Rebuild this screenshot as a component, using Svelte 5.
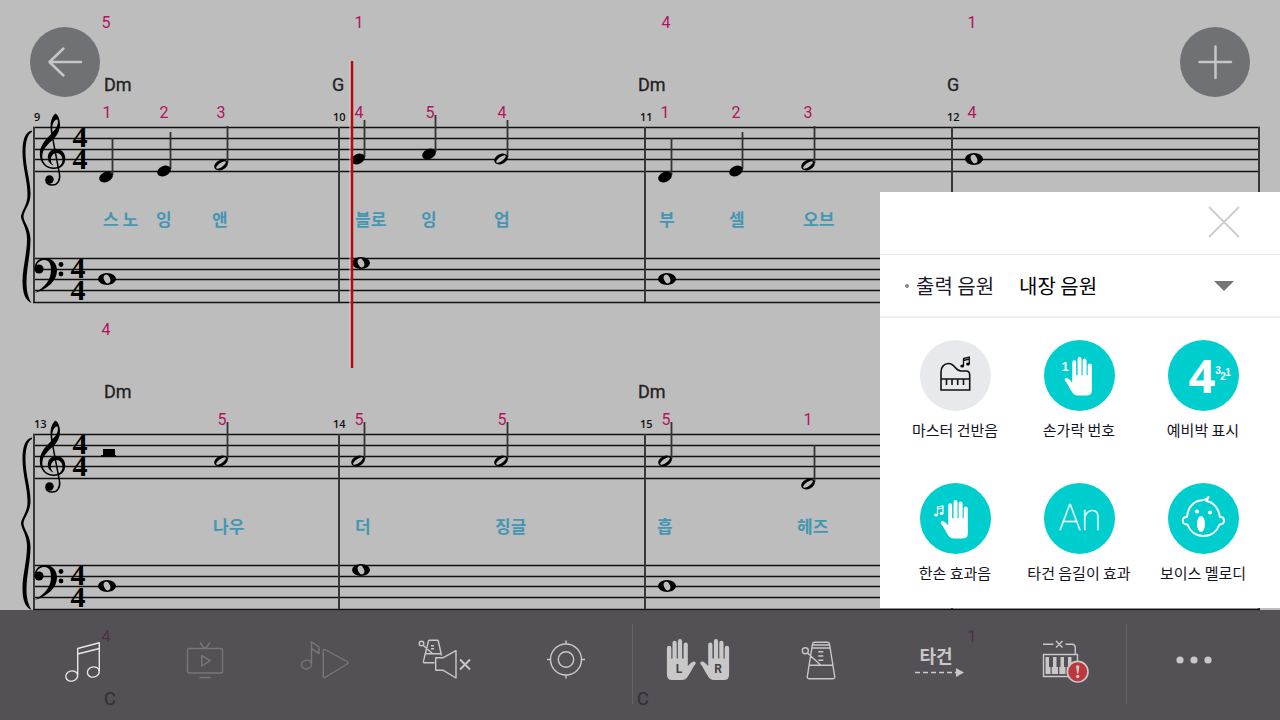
<script lang="ts">
  type Head = 'quarter' | 'half' | 'whole'

  interface Note {
    x: number
    y: number
    head: Head
  }

  interface Mark {
    x: number
    text: string
  }

  interface System {
    bassFingers: Mark[]
    chords: Mark[]
    bars: Mark[]
    fingers: Mark[]
    lyrics: Mark[]
    notes: Note[]
    rest?: boolean
    cursor?: number
  }

  const staffLines = [127, 138, 149, 159, 171, 258, 269, 279, 290, 302]
  const barLines = [34, 339, 645, 952, 1259]

  const systems: System[] = [
    {
      bassFingers: [
        { x: 106, text: '5' },
        { x: 359, text: '1' },
        { x: 666, text: '4' },
        { x: 972, text: '1' }
      ],
      chords: [
        { x: 104, text: 'Dm' },
        { x: 332, text: 'G' },
        { x: 638, text: 'Dm' },
        { x: 947, text: 'G' }
      ],
      bars: [
        { x: 34, text: '9' },
        { x: 333, text: '10' },
        { x: 640, text: '11' },
        { x: 947, text: '12' }
      ],
      fingers: [
        { x: 107, text: '1' },
        { x: 164, text: '2' },
        { x: 221, text: '3' },
        { x: 359, text: '4' },
        { x: 430, text: '5' },
        { x: 502, text: '4' },
        { x: 665, text: '1' },
        { x: 736, text: '2' },
        { x: 808, text: '3' },
        { x: 972, text: '4' }
      ],
      lyrics: [
        { x: 103, text: '스 노' },
        { x: 156, text: '잉' },
        { x: 212, text: '앤' },
        { x: 355, text: '블로' },
        { x: 421, text: '잉' },
        { x: 494, text: '업' },
        { x: 659, text: '부' },
        { x: 729, text: '셀' },
        { x: 803, text: '오브' }
      ],
      notes: [
        { x: 106, y: 177, head: 'quarter' },
        { x: 164, y: 171, head: 'quarter' },
        { x: 221, y: 165, head: 'half' },
        { x: 358, y: 159, head: 'quarter' },
        { x: 429, y: 154, head: 'quarter' },
        { x: 501, y: 159, head: 'half' },
        { x: 665, y: 177, head: 'quarter' },
        { x: 736, y: 171, head: 'quarter' },
        { x: 808, y: 165, head: 'half' },
        { x: 974, y: 159, head: 'whole' },
        { x: 107, y: 279, head: 'whole' },
        { x: 361, y: 263, head: 'whole' },
        { x: 667, y: 279, head: 'whole' }
      ],
      cursor: 352
    },
    {
      bassFingers: [{ x: 106, text: '4' }],
      chords: [
        { x: 104, text: 'Dm' },
        { x: 638, text: 'Dm' }
      ],
      bars: [
        { x: 34, text: '13' },
        { x: 333, text: '14' },
        { x: 640, text: '15' }
      ],
      fingers: [
        { x: 222, text: '5' },
        { x: 359, text: '5' },
        { x: 502, text: '5' },
        { x: 666, text: '5' },
        { x: 808, text: '1' }
      ],
      lyrics: [
        { x: 213, text: '나우' },
        { x: 355, text: '더' },
        { x: 495, text: '징글' },
        { x: 657, text: '흡' },
        { x: 797, text: '헤즈' }
      ],
      notes: [
        { x: 221, y: 154, head: 'half' },
        { x: 358, y: 154, head: 'half' },
        { x: 501, y: 154, head: 'half' },
        { x: 665, y: 154, head: 'half' },
        { x: 808, y: 177, head: 'half' },
        { x: 107, y: 279, head: 'whole' },
        { x: 361, y: 263, head: 'whole' },
        { x: 667, y: 279, head: 'whole' }
      ],
      rest: true
    },
    {
      bassFingers: [
        { x: 106, text: '4' },
        { x: 972, text: '1' }
      ],
      chords: [
        { x: 104, text: 'C' },
        { x: 637, text: 'C' }
      ],
      bars: [],
      fingers: [],
      lyrics: [],
      notes: []
    }
  ]

  let options = $state([
    { id: 'piano', label: '마스터 건반음', on: false },
    { id: 'fingers', label: '손가락 번호', on: true },
    { id: 'count', label: '예비박 표시', on: true },
    { id: 'onehand', label: '한손 효과음', on: true },
    { id: 'length', label: '타건 음길이 효과', on: true },
    { id: 'voice', label: '보이스 멜로디', on: true }
  ])

  let source = $state('내장 음원')
</script>

{#snippet hand()}
  <path
    d="M8.2 21V5.5a2.1 2.1 0 0 1 4.2 0V19.5h1.5V2.2a2.1 2.1 0 0 1 4.2 0V19.5h1.2V3.8a2.1 2.1 0 0 1 4.2 0V19.5h1.2V9a2.2 2.2 0 0 1 4.4 0V35.5Q29 41 24 41H14Q10.5 41 8.5 38C5 33 3.5 28.5 0.5 25Q-0.5 22 3 22.5Q6 24 8.2 27Z"
  />
{/snippet}

{#snippet optionIcon(id: string)}
  {#if id === 'piano'}
    <g fill="none" stroke="#111" stroke-width="1.6">
      <path d="M21 50V32C21 27 24 23.5 28.5 23.5C35.5 23.5 34.5 31 41 31H46Q49.7 31 49.7 35V50ZM21 39H49.7M26.5 39V45M32 39V45M37.7 39V45M43.5 39V45" />
      <path d="M43.5 26V18.5L49.3 17V24M43.5 20.5L49.3 19" stroke-width="1.3" />
    </g>
    <ellipse cx="42.2" cy="26" rx="1.9" ry="1.5" />
    <ellipse cx="48" cy="24" rx="1.9" ry="1.5" />
  {:else if id === 'fingers'}
    <g fill="#fff">
      <g transform="translate(20.5 17) scale(.94)">{@render hand()}</g>
      <text x="21" y="31" class="tiny-one">1</text>
    </g>
  {:else if id === 'count'}
    <g fill="#fff">
      <text x="34" y="53" class="big-four">4</text>
      <text x="50" y="34" class="tiny">3</text>
      <text x="55" y="40" class="tiny">2</text>
      <text x="60" y="36" class="tiny">1</text>
    </g>
  {:else if id === 'onehand'}
    <g fill="#fff">
      <g transform="translate(20.5 17) scale(.94)">{@render hand()}</g>
      <path d="M17.5 32V24L23 23V30.5M17.5 26L23 25" fill="none" stroke="#fff" stroke-width="1.2" />
      <ellipse cx="16" cy="32" rx="1.9" ry="1.5" />
      <ellipse cx="21.5" cy="30.5" rx="1.9" ry="1.5" />
    </g>
  {:else if id === 'length'}
    <text x="36" y="47" class="an">An</text>
  {:else}
    <path
      d="M32 17.5C36 17.5 38.5 16 40.5 14L38.5 18C46 19.5 51 26 52 34C57 33 58 42 51.5 41.5C49 48.500 43 53 35.500 53S22 48.500 19.500 41.500C13 42 13.500 33 19 34C19.500 26 24 19 32 17.500"
      fill="none"
      stroke="#fff"
      stroke-width="2"
      stroke-linejoin="round"
    />
    <g fill="#fff">
      <circle cx="29" cy="28.5" r="2.1" />
      <circle cx="42" cy="29.5" r="2.1" />
      <ellipse cx="33" cy="41" rx="4" ry="8" />
    </g>
  {/if}
{/snippet}

<main class="player">
  <section class="score" aria-label="악보">
    {#each systems as system}
      <svg class="system" viewBox="0 0 1280 307">
        {#each system.bassFingers as mark}
          <text x={mark.x} y="28" class="finger">{mark.text}</text>
        {/each}
        {#each system.chords as mark}
          <text x={mark.x} y="91" class="chord">{mark.text}</text>
        {/each}

        {#if system.bars.length}
          {#each staffLines as y}
            <line x1="33" x2="1260" y1={y + 0.5} y2={y + 0.5} stroke="#111" stroke-width="1.5" />
          {/each}
          {#each barLines as x}
            <line x1={x} x2={x} y1="127" y2="302" stroke="#383838" stroke-width="2" />
          {/each}

          <!-- brace -->
          <path d="M32 130.5C25 132 22.5 140 22.5 152C22.5 168 27.5 180 27.5 195C27.5 205 21 212 21 216.5C21 221 27 228 27 239C27 254 22.5 268 22.5 281C22.5 293 25 300 31.5 303C28 297 26.5 291 26.5 282C26.5 268 30.5 254 30.5 240C30.5 228 23.5 222 23.5 216.5C23.5 211 30.5 205 30.5 194C30.5 180 25.5 168 25.5 152C25.5 142 27.5 134 32 132Z" />
          <!-- treble clef -->
          <path
            fill-rule="evenodd"
            d="M55.5 113.5C51 117 49.5 124 51.2 134C45 140 39.8 146 39.8 154C39.8 163 46 169 54 169C60.5 169 65.3 165 65.3 158.5C65.3 153 61.5 149 56.5 149C51.5 149 47.8 152.5 47.8 157.5C47.8 161.5 50 164 53.5 165.5C51.5 163.5 50.5 161.5 50.8 159C51.2 156 53.5 153 56.5 153C60 153 62.5 156 62.5 160C62.5 164.5 59 167.5 54 167.5C47 167.5 42.3 163 42.3 156.5C42.3 149 48 144 53 139.5C57 135.5 60 131 60 124.5C60 119.5 58.5 115.5 55.5 113.5ZM57.5 119.5C59 124 56 129 52.6 132C51.5 127 53 119.5 57.5 119.5Z"
          />
          <path d="M51.5 132L59.5 174C60.5 181 57 185 52.5 185C48.5 185 46 183 46 180" fill="none" stroke="#000" stroke-width="1.5" />
          <circle cx="49.5" cy="179.5" r="4.2" />
          <!-- bass clef -->
          <path d="M34.5 268C35 261.5 39.5 258 45 258C52 258 57 263 57 270.5C57 281 47 289.5 34.5 293C45 287 51 280 51 270C51 263.5 49 260 44.5 260C40.5 260 37 262.5 36.5 266Z" />
          <circle cx="39" cy="269" r="4.6" />
          <circle cx="61" cy="264.5" r="2.4" />
          <circle cx="61" cy="274" r="2.4" />

          <text x="80" y="147" class="meter">4</text>
          <text x="80" y="169" class="meter">4</text>
          <text x="78" y="278" class="meter">4</text>
          <text x="78" y="300" class="meter">4</text>
        {/if}

        {#if system.rest}
          <path d="M103 142H115V148H116V150H101V148H103Z" />
        {/if}
        {#each system.notes as note}
          <g transform="translate({note.x} {note.y})">
            {#if note.head === 'whole'}
              <ellipse rx="9" ry="6" />
              <ellipse rx="3" ry="4.5" fill="#bdbdbd" transform="rotate(-25)" />
            {:else}
              <line x1="6.5" x2="6.5" y1="-2" y2="-39" stroke="#333" stroke-width="1.8" />
              <ellipse rx="7.2" ry="5" transform="rotate(-25)" />
              {#if note.head === 'half'}
                <ellipse rx="5.8" ry="2" fill="#bdbdbd" transform="rotate(-35)" />
              {/if}
            {/if}
          </g>
        {/each}

        {#each system.bars as mark}
          <text x={mark.x} y="121" class="bar-number">{mark.text}</text>
        {/each}
        {#each system.fingers as mark}
          <text x={mark.x} y="118" class="finger">{mark.text}</text>
        {/each}
        {#each system.lyrics as mark}
          <text x={mark.x} y="226" class="lyric">{mark.text}</text>
        {/each}
        {#if system.cursor}
          <g transform="translate({system.cursor} 61)">
            <path d="M-2 0V307" stroke="#d8d8d8" />
            <path d="M0 0V307" stroke="#b8090d" stroke-width="2.5" />
          </g>
        {/if}
      </svg>
    {/each}
  </section>

  <header class="corner-buttons">
    <button class="round" aria-label="뒤로">
      <svg width="70" height="70"><path d="M51 35H19.5M33.5 21.5L19.5 35L33.5 48.5" /></svg>
    </button>
    <button class="round" aria-label="추가">
      <svg width="70" height="70"><path d="M19.5 35H51M35.5 19.5V51" /></svg>
    </button>
  </header>

  <aside class="panel">
    <div class="panel-head">
      <button class="close" aria-label="닫기">
        <svg width="32" height="32"><path d="M1 1L31 31M31 1L1 31" stroke="#ccc" stroke-width="1.8" /></svg>
      </button>
    </div>
    <div class="source-row">
      <label for="source">출력 음원</label>
      <div class="select">
        <select id="source" bind:value={source}>
          <option>내장 음원</option>
        </select>
        <svg width="20" height="10"><path d="M0 0H20L10 10Z" fill="#757575" /></svg>
      </div>
    </div>
    <div class="options">
      {#each options as option}
        <button class="option" aria-pressed={option.on} onclick={() => (option.on = !option.on)}>
          <svg class="disc" class:on={option.on} viewBox="0 0 71 71">{@render optionIcon(option.id)}</svg>
          <span>{option.label}</span>
        </button>
      {/each}
    </div>
  </aside>

  <nav class="toolbar">
    <div class="group group--main">
      <button class="tool active" aria-label="악보">
        <svg viewBox="0 0 72 80">
          <ellipse cx="22.7" cy="52" rx="6" ry="5" transform="rotate(-15 22.7 52)" />
          <ellipse cx="44.3" cy="48" rx="6" ry="5" transform="rotate(-15 44.3 48)" />
          <path d="M28.7 51V24.5L50.3 18.7V47M28.7 30L50.3 24.5" />
        </svg>
      </button>
      <button class="tool dim" aria-label="영상">
        <svg viewBox="0 0 72 80">
          <rect x="18.5" y="24.5" width="35" height="24.5" rx="2" />
          <path d="M31 18.5L35.5 24.5M41 18.5L36.5 24.5M32.7 31.7L41.3 36.7L32.7 42ZM30.5 53.5H41.5" />
        </svg>
      </button>
      <button class="tool dim" aria-label="연주 재생">
        <svg viewBox="0 0 72 80">
          <ellipse cx="16.5" cy="40.5" rx="5" ry="4.3" transform="rotate(-15 16.5 40.5)" />
          <path d="M21.5 40V17.7L29 23V29.3L21.500 24.700M35 25.500L57 37.500Q58.500 39 57 40L35 53.500Q33.300 54 33.300 52V27Q33.300 25 35 25.500Z" />
        </svg>
      </button>
      <button class="tool" aria-label="메트로놈 음소거">
        <svg viewBox="0 0 72 80">
          <circle cx="11.5" cy="19.5" r="2.3" />
          <path d="M13.3 21.5L22.7 29.7M24.5 38.7H14Q13 38.5 13.5 37L18.5 17Q18.7 16.3 19.5 16.3H27Q28 16.3 28.3 17L31.5 31.5M15.7 29.7H31M21 21.7H24M21 24.7H24" />
          <path d="M25.7 33.7H33.3L46 26.7V54L33.3 46.3H25.7Z" />
          <path d="M50 35.5L60 45.5M60 35.5L50 45.5" stroke-width="1.9" />
        </svg>
      </button>
      <button class="tool" aria-label="위치 맞춤">
        <svg viewBox="0 0 72 80">
          <circle cx="36" cy="35.5" r="15.5" />
          <circle cx="36" cy="35.5" r="7.7" />
          <path d="M17 35.5H20.5M51.5 35.5H55M36 16.5V20M36 51V54.5" />
        </svg>
      </button>
    </div>

    <div class="group group--practice">
      <button class="tool" aria-label="양손">
        <svg viewBox="0 0 72 80">
          <g class="solid">
            <g transform="translate(34 15) scale(-1 1)">{@render hand()}</g>
            <g transform="translate(38 15)">{@render hand()}</g>
          </g>
          <text x="17" y="49" class="hand-letter">L</text>
          <text x="56" y="49" class="hand-letter">R</text>
        </svg>
      </button>
      <button class="tool" aria-label="메트로놈">
        <svg viewBox="0 0 72 80">
          <circle cx="22.3" cy="26.7" r="3" />
          <path d="M29.5 20Q30 18.3 31.5 18.3H44.5Q46 18.3 46.5 20L51.7 52.5Q52 54.7 50 54.7H26Q24 54.7 24.3 52.5ZM29 21H46.7M28.7 24H47M26 41.3H49.5M24.5 29L37.3 40.7M35.3 27.7H40.3M35.3 32H40.3M35.3 36.3H40.3" />
        </svg>
      </button>
      <button class="tool">
        <svg viewBox="0 0 72 80">
          <text x="32" y="39" class="stroke-label">타건</text>
          <path d="M11 48.5H52" stroke-dasharray="5 3" stroke-width="1.7" />
          <path class="solid" d="M52 44L60 48.5L52 53Z" />
        </svg>
      </button>
      <button class="tool" aria-label="건반 연결 안 됨">
        <svg viewBox="0 0 72 80">
          <path d="M18 20.3H28.5M31 17L37.5 23.5M37.5 17L31 23.5M40.5 20.3H47Q50.3 20.5 50.3 24V30" />
          <rect x="18.5" y="30.5" width="34" height="22" />
          <path class="solid" d="M20.5 33H24V43H25.5V50H20.5ZM28 33H31.5V43H33V50H26.7V43H28ZM35.5 33H39V43H40.5V50H34.3V43H35.5ZM43 33H46.5V50H41.7V43H43Z" />
          <circle cx="52.7" cy="47.7" r="10.3" fill="#bf363c" stroke-width="1.6" />
          <path class="solid" d="M51 42Q52.7 40.5 54.4 42L53.4 49.5H52Z" />
          <circle class="solid" cx="52.7" cy="52.5" r="1.7" />
        </svg>
      </button>
    </div>

    <div class="group group--more">
      <button class="tool" aria-label="더보기">
        <svg viewBox="0 0 72 80">
          <g class="solid">
            <circle cx="21" cy="36" r="3.6" />
            <circle cx="35" cy="36" r="3.6" />
            <circle cx="49" cy="36" r="3.6" />
          </g>
        </svg>
      </button>
    </div>
  </nav>
</main>

<style>
  :global(body) {
    background: #bdbdbd;
  }

  .player {
    position: relative;
    height: 100vh;
    overflow: hidden;
    background: #bdbdbd;
    font-family: Roboto, 'Noto Sans CJK KR', sans-serif;
  }

  button {
    padding: 0;
    border: 0;
    background: none;
    font: inherit;
    cursor: pointer;
  }

  svg {
    display: block;
  }

  .system {
    width: 100%;
    overflow: visible;
  }

  .finger {
    font-size: 16px;
    fill: #b0135f;
    text-anchor: middle;
  }

  .chord {
    font-size: 18px;
    fill: #222;
    stroke: #222;
    stroke-width: 0.3px;
  }

  .bar-number {
    font: 600 11px 'Open Sans', sans-serif;
    fill: #111;
  }

  .lyric {
    font: 700 17px 'Noto Sans CJK KR', sans-serif;
    fill: #4596b3;
  }

  .meter {
    font: 700 30px 'Liberation Serif', serif;
    text-anchor: middle;
  }

  .corner-buttons {
    position: absolute;
    top: 0;
    left: 0;
    right: 0;
    display: flex;
    justify-content: space-between;
    padding: 27px 30px;
  }

  .round {
    border-radius: 50%;
    background: #707175;
  }

  .round path {
    fill: none;
    stroke: #c6c6c6;
    stroke-width: 2.5px;
    stroke-linecap: round;
    stroke-linejoin: round;
  }

  .panel {
    position: absolute;
    right: 0;
    bottom: 112px;
    width: 400px;
    background: #fff;
    font-family: 'Noto Sans CJK KR', sans-serif;
  }

  .panel-head {
    display: flex;
    justify-content: flex-end;
    padding: 14px 40px 16px;
    border-bottom: 1px solid #e4e5ee;
  }

  .source-row {
    display: flex;
    align-items: center;
    height: 61px;
    padding: 0 46px 0 25px;
    border-bottom: 2px solid #efeff1;
    font-size: 20px;
    line-height: 30px;
  }

  .source-row label {
    display: flex;
    align-items: center;
    gap: 7px;
    margin-right: 25px;
    color: #1b1a2a;
  }

  .source-row label::before {
    content: '';
    width: 4px;
    height: 4px;
    border-radius: 50%;
    background: #85858f;
  }

  .select {
    flex: 1;
    display: grid;
    align-items: center;
  }

  .select > * {
    grid-area: 1 / 1;
  }

  .select svg {
    justify-self: end;
    pointer-events: none;
  }

  select {
    appearance: none;
    padding: 0;
    border: 0;
    background: none;
    color: #000;
    font: inherit;
  }

  .options {
    display: grid;
    grid-template-columns: repeat(3, 1fr);
    row-gap: 42px;
    padding: 22px 15px 24px 13px;
  }

  .option {
    display: flex;
    flex-direction: column;
    align-items: center;
    gap: 8px;
    color: #14131f;
    font-size: 15px;
    line-height: 22px;
    white-space: nowrap;
  }

  .disc {
    width: 71px;
    height: 71px;
    border-radius: 50%;
    background: #e8e9ed;
  }

  .disc.on {
    background: #00cdcd;
  }

  .disc text {
    text-anchor: middle;
  }

  .tiny-one {
    font: 700 13px 'Liberation Sans', sans-serif;
  }

  .big-four {
    font: 700 47px 'Open Sans', sans-serif;
  }

  .tiny {
    font: 700 10px 'Liberation Sans', sans-serif;
  }

  .an {
    font: 100 37px Roboto, sans-serif;
    fill: #fff;
    stroke: #fff;
    stroke-width: 0.3px;
  }

  .toolbar {
    position: absolute;
    left: 0;
    right: 0;
    bottom: 0;
    display: grid;
    grid-template-columns: 632fr 494fr 154fr;
    padding: 14px 0 16px;
    background: rgba(56, 54, 60, 0.8);
  }

  .group {
    display: flex;
  }

  .group + .group {
    border-left: 1px solid #636367;
  }

  .group--main {
    padding: 0 6px 0 25px;
  }

  .group--practice {
    padding: 0 5px;
  }

  .group--more {
    padding-right: 18px;
  }

  .tool {
    flex: 1;
    display: flex;
    justify-content: center;
    color: #c8c8c8;
  }

  .tool svg {
    width: 72px;
    height: 80px;
    fill: none;
    stroke: currentColor;
    stroke-width: 1.4px;
    stroke-linejoin: round;
  }

  .tool.active {
    color: #e6e6e6;
  }

  .tool.dim {
    color: #77777a;
  }

  .tool .solid {
    fill: currentColor;
    stroke: none;
  }

  .hand-letter {
    font: 700 12px Roboto, sans-serif;
    fill: #454448;
    stroke: none;
    text-anchor: middle;
  }

  .stroke-label {
    font: 700 18px 'Noto Sans CJK KR', sans-serif;
    fill: currentColor;
    stroke: none;
    text-anchor: middle;
  }
</style>
